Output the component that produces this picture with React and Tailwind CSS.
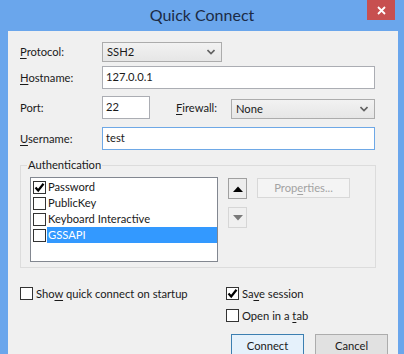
import React from 'react';

const Check = ({ checked }) => (
  <span className="w-[13px] h-[13px] shrink-0 border border-[#333333] bg-white flex items-center justify-center">
    {checked && (
      <svg width="11" height="11" viewBox="0 0 11 11">
        <path d="M1.5 5.5 L4.2 8.5 L9.5 1.8" fill="none" stroke="#000" strokeWidth="2.2" />
      </svg>
    )}
  </span>
);

const Chevron = () => (
  <svg width="8" height="6" viewBox="0 0 8 6" className="shrink-0">
    <path d="M0.5 1 L4 4.5 L7.5 1" fill="none" stroke="#606060" strokeWidth="1.6" />
  </svg>
);

const Combo = ({ value, width }) => (
  <div className={`${width} h-[20px] border border-[#acacac] bg-gradient-to-b from-[#f2f2f2] to-[#e6e6e6] flex items-center justify-between pl-[4px] pr-[6px]`}>
    <span>{value}</span>
    <Chevron />
  </div>
);

const Field = ({ value, width, focused }) => (
  <div
    className={`${width} h-[23px] bg-white border flex items-center pl-[3px] pb-[2px] ${
      focused ? 'border-[#6ea8e6]' : 'border-[#abadb3]'
    }`}
  >
    {value}
  </div>
);

const Label = ({ pre, u, post }) => (
  <span className="w-[82px] shrink-0 text-[#1a1a1a]">
    {pre}
    <span className="underline underline-offset-2">{u}</span>
    {post}
  </span>
);

const methods = [
  { name: 'Password', on: true },
  { name: 'PublicKey', on: false },
  { name: 'Keyboard Interactive', on: false },
  { name: 'GSSAPI', on: false, selected: true },
];

export default function App() {
  return (
    <div className="w-[404px] h-[354px] overflow-hidden bg-[#6aa6ec] flex flex-col font-[Lato,sans-serif] text-[11.2px] leading-[16px] text-[#1a1a1a]">
      {/* title bar */}
      <div className="h-[31px] shrink-0 relative flex items-center justify-center">
        <span className="text-[16px] text-[#1b2b45] mt-[-1px]">Quick Connect</span>
        <button className="absolute top-0 right-[9px] w-[28px] h-[20px] bg-[#c75050] flex items-center justify-center">
          <svg width="9" height="9" viewBox="0 0 9 9">
            <path d="M1 1 L8 8 M8 1 L1 8" stroke="#fff" strokeWidth="1.8" />
          </svg>
        </button>
      </div>

      <div className="flex-1 ml-[8px] mr-[6px] bg-[#f0f0f0] pl-[12px] flex flex-col">
        <div className="flex items-center h-[20px] mt-[11px]">
          <Label u="P" post="rotocol:" />
          <Combo value="SSH2" width="w-[120px]" />
        </div>
        <div className="flex items-center h-[23px] mt-[4px]">
          <Label u="H" post="ostname:" />
          <Field value="127.0.0.1" width="w-[273px]" />
        </div>
        <div className="flex items-center h-[23px] mt-[7px]">
          <Label pre="Port:" />
          <Field value="22" width="w-[48px]" />
          <span className="ml-[26px] w-[55px]">
            <span className="underline underline-offset-2">F</span>irewall:
          </span>
          <div className="mt-[2px]">
            <Combo value="None" width="w-[144px]" />
          </div>
        </div>
        <div className="flex items-center h-[23px] mt-[8px]">
          <Label u="U" post="sername:" />
          <Field value="test" width="w-[273px]" focused />
        </div>

        <fieldset className="w-[356px] mt-[7px] border border-[#dcdcdc] pl-[9px] pb-[5px]">
          <legend className="-ml-[3px] px-[1px] leading-[16px]">Authentication</legend>
          <div className="flex mt-[4px]">
            <div className="w-[188px] h-[85px] border border-[#828790] bg-white pt-[1px] flex flex-col">
              {methods.map((m) => (
                <div key={m.name} className="h-[16px] flex items-center pl-[2px]">
                  <Check checked={m.on} />
                  <span
                    className={`ml-[1px] pl-[1px] flex-1 h-[16px] leading-[16px] ${
                      m.selected ? 'bg-[#3399ff] text-white' : ''
                    }`}
                  >
                    {m.name}
                  </span>
                </div>
              ))}
            </div>

            <div className="ml-[10px] flex flex-col">
              <button className="mt-[1px] w-[19px] h-[21px] border border-[#a0a0a0] bg-[#ededed] flex items-center justify-center">
                <svg width="10" height="6" viewBox="0 0 10 6">
                  <path d="M0 6 L5 0.5 L10 6 Z" fill="#000" />
                </svg>
              </button>
              <button className="mt-[8px] w-[19px] h-[21px] border border-[#d6d6d6] bg-[#f0f0f0] flex items-center justify-center">
                <svg width="10" height="6" viewBox="0 0 10 6">
                  <path d="M0 0 L5 5.5 L10 0 Z" fill="#7a7a7a" />
                </svg>
              </button>
            </div>

            <button className="ml-[10px] mt-[1px] w-[93px] h-[20px] border border-[#d8d8d8] bg-[#f4f4f4] text-[#a3a3a3] flex items-center justify-center">
              Prop<span className="underline underline-offset-2">e</span>rties...
            </button>
          </div>
        </fieldset>

        <div className="flex mt-[19px]">
          <div className="w-[206px] flex items-start">
            <div className="flex items-center h-[13px]">
              <Check />
              <span className="ml-[3px]">
                Sho<span className="underline underline-offset-2">w</span> quick connect on startup
              </span>
            </div>
          </div>
          <div className="flex flex-col">
            <div className="flex items-center h-[13px]">
              <Check checked />
              <span className="ml-[3px]">
                Sa<span className="underline underline-offset-2">v</span>e session
              </span>
            </div>
            <div className="flex items-center h-[13px] mt-[9px]">
              <Check />
              <span className="ml-[3px]">
                Open in a <span className="underline underline-offset-2">t</span>ab
              </span>
            </div>
            <div className="flex ml-[5px] mt-[12px] gap-[11px]">
              <button className="w-[73px] h-[23px] border border-[#3c7fb1] bg-[#e5f1fb] flex items-center justify-center">
                Connect
              </button>
              <button className="w-[73px] h-[23px] border border-[#acacac] bg-[#e1e1e1] flex items-center justify-center">
                Cancel
              </button>
            </div>
          </div>
        </div>
      </div>
    </div>
  );
}
